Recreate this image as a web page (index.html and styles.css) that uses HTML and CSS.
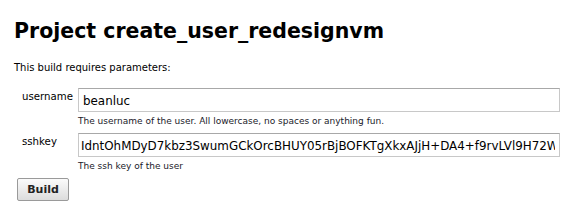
FILE: index.html
```html
<!DOCTYPE html>
<html lang="en">
<head>
  <meta charset="UTF-8">
  <title>Project create_user_redesignvm</title>
  <link rel="stylesheet" href="styles.css">
</head>
<body>

  <div class="main">
    <h1>Project create_user_redesignvm</h1>
    <p class="intro">This build requires parameters:</p>

    <form class="params">
      <label class="name" for="username">username</label>
      <input type="text" id="username" value="beanluc">
      <div class="help">The username of the user. All lowercase, no spaces or anything fun.</div>

      <label class="name" for="sshkey">sshkey</label>
      <input type="text" id="sshkey" value="IdntOhMDyD7kbz3SwumGCkOrcBHUY05rBjBOFKTgXkxAJjH+DA4+f9rvLVl9H72Wor4IVw">
      <div class="help">The ssh key of the user</div>
    </form>

    <button class="build">Build</button>
  </div>

</body>
</html>
```

FILE: styles.css
```css
body {
  margin: 0;
  font-family: 'DejaVu Sans', Verdana, sans-serif;
  font-size: 10px;
  color: #000;
  background: #fff;
}

.main {
  padding: 17px 14px 0 14px;
}

h1 {
  font-size: 20.5px;
  font-weight: bold;
  margin: 0;
  line-height: 28px;
}

.intro {
  margin: 16px 0 13px 0;
  line-height: 14px;
}

.params {
  display: grid;
  grid-template-columns: 64px 482px;
}

.name {
  padding: 3px 0 0 8px;
  font-size: 10.2px;
}

input[type="text"] {
  box-sizing: border-box;
  width: 482px;
  height: 24px;
  margin: 0;
  padding: 2px 4px 0 4px;
  border: 1px solid #c8c8c8;
  border-top-color: #a8a8a8;
  font-family: 'DejaVu Sans', Verdana, sans-serif;
  font-size: 11.9px;
  color: #000;
  overflow: hidden;
}

#sshkey {
  padding-left: 2px;
}

.help {
  grid-column: 2;
  font-size: 9px;
  line-height: 11px;
  color: #1a1a2a;
  padding: 4px 0 6px 0;
}

.build {
  margin-left: 3px;
  width: 52px;
  height: 23px;
  font-family: 'DejaVu Sans', Verdana, sans-serif;
  font-size: 11px;
  font-weight: bold;
  color: #222;
  border: 1px solid #9a9a9a;
  border-radius: 2px;
  background: linear-gradient(#fbfbfb, #dcdcdc);
}
```
